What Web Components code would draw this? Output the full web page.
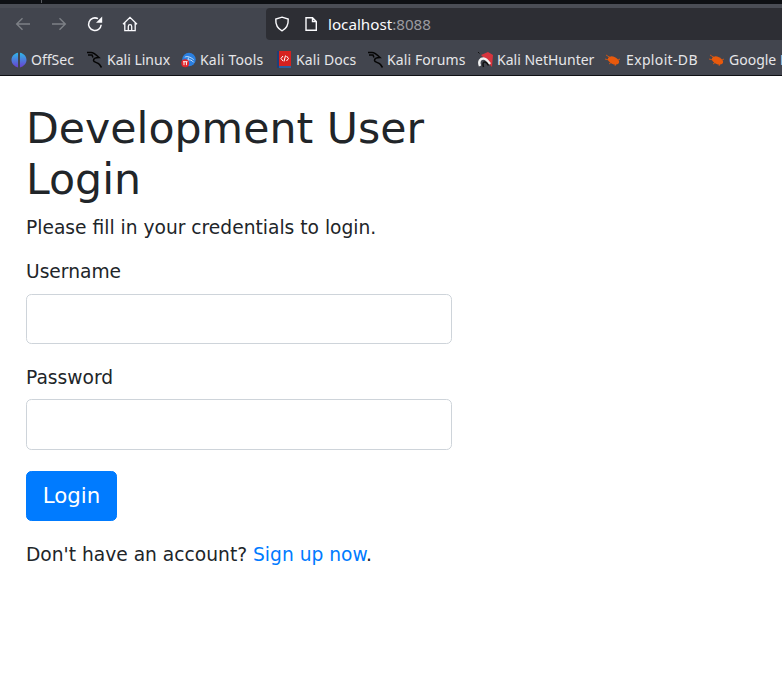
<!DOCTYPE html>
<html lang="en"><head><meta charset="utf-8"><title>Login</title>
<style>
html,body{margin:0;padding:0;background:#fff;height:100%;overflow:hidden}
body{font-family:"DejaVu Sans",sans-serif}
browser-chrome,login-page{display:block}
</style></head><body>
<template id="t-chrome">
<style>
:host{display:block;font-family:"Noto Sans",sans-serif;background:#42454e;color:#fbfbfe}
.top{height:4px;background:#0e1014;display:flex}
.tick{width:1px;height:3px;margin-left:41px;background:#5a5c62}
.bar{height:40px;display:flex;align-items:center;background:linear-gradient(#4a4d55 0,#4a4d55 4px,#42454e 4px)}
.navs{display:flex;width:266px;flex:none;padding-left:5px;box-sizing:border-box}
.nav{width:36px;height:36px;display:flex;align-items:center;justify-content:center;flex:none}
.nav.h{margin-left:-1px}
.url{flex:1;height:32px;background:#2d2e34;border-radius:4px 0 0 4px;display:flex;align-items:center;padding-left:8px;font-size:15.2px;color:#fbfbfe}
.url .g{color:#9a9aa0}
.url svg{flex:none}
.host{margin-left:10px}
.marks{height:31px;display:flex;align-items:center;padding-left:11px;font-size:14px;color:#e6e6e9;white-space:nowrap;overflow:hidden;border-bottom:1px solid #0e1014}
.m{display:flex;align-items:center;flex:none;box-sizing:border-box}
.m svg{flex:none;display:block;margin-right:4px}
</style>
<div class="top"><div class="tick"></div></div>
<div class="bar">
<div class="navs">
<div class="nav"><svg width="16" height="14" viewBox="0 0 16 14" fill="none" stroke="#7d8086" stroke-width="1.4"><path d="M15 7H2M7.500 1.200 1.700 7l5.800 5.800"/></svg></div>
<div class="nav"><svg width="16" height="14" viewBox="0 0 16 14" fill="none" stroke="#7d8086" stroke-width="1.4"><path d="M1 7h13M8.500 1.200 14.300 7l-5.800 5.800"/></svg></div>
<div class="nav"><svg width="16" height="16" viewBox="0 0 16 16" fill="none" stroke="#fbfbfe" stroke-width="1.5"><path d="M14.200 8.800A6.300 6.300 0 1 1 11 2.700"/><path d="M15.200.6v6.200H9z" fill="#fbfbfe" stroke="none"/></svg></div>
<div class="nav h"><svg width="16" height="16" viewBox="0 0 16 16" fill="none" stroke="#fbfbfe" stroke-width="1.300"><path d="M1 8.200 8 1.300l7 6.900M2.800 6.600v8h10.400v-8M6.300 14.600v-4.200a1.700 1.700 0 0 1 3.400 0v4.200"/></svg></div>
</div>
<div class="url">
<svg width="16" height="16" viewBox="0 0 16 16" fill="none" stroke="#fbfbfe" stroke-width="1.4"><path d="M8 1.200 14.200 3c.3 5.500-1.800 9.600-6.200 11.800C3.600 12.600 1.500 8.500 1.800 3z"/></svg>
<svg style="margin-left:14px" width="14" height="16" viewBox="0 0 14 16" fill="none" stroke="#fbfbfe" stroke-width="1.4"><path d="M2 1.700h6.500l3.800 3.800v8.800H2zM8.500 1.700v3.800h3.800"/></svg>
<span class="host">localhost<span class="g">:8088</span></span>
</div>
</div>
<div class="marks">
<span class="m" style="width:76px"><svg width="16" height="16" viewBox="0 0 16 16"><defs><linearGradient id="os" x1="0" y1="0" x2="0" y2="1"><stop offset="0" stop-color="#2fb6e8"/><stop offset="1" stop-color="#6a3fd0"/></linearGradient></defs><path d="M7 .8C3 1.500.5 4.500.5 8S3.500 14.500 7 15.500zM9 .8c4 .7 6.500 3.700 6.500 7.200S12.500 14.500 9 15.500z" fill="url(#os)"/></svg>OffSec</span>
<span class="m" style="width:94px"><svg width="16" height="17" viewBox="0 0 16 17" fill="none" stroke="#050505" stroke-width="1.500"><path d="M0 1.500h4C7 1.500 9 3.500 12 6.500 9 6.500 6.500 7.500 6.500 9.500c0 2 4 1.500 6 4l2 3M1 4h4l1 2.500"/></svg>Kali Linux</span>
<span class="m" style="width:96px;letter-spacing:.2px"><svg width="15" height="16" viewBox="0 0 16 16" style="margin-right:4px"><circle cx="8.500" cy="7.500" r="7.200" fill="#2a7fe0"/><path d="M4 5c3-1.500 6 0 9.500 2.500M8 5.500l-1 4M7.500 8c2-.5 4 0 6 2.500" stroke="#cfe3fa" stroke-width="1" fill="none"/><circle cx="4.500" cy="11.500" r="4.200" fill="#e0262a"/><path d="M3.200 10v3.500M5.800 10v3.500M2.200 9.800h4.800" stroke="#fff" stroke-width="1"/></svg>Kali Tools</span>
<span class="m" style="width:91px;letter-spacing:.1px"><svg width="15" height="17" viewBox="0 0 15 17" style="margin-right:4px"><rect x="1" y="0" width="13" height="15" fill="#d6211f"/><rect x="1" y="15" width="13" height="2" fill="#2e5f9e"/><path d="M0 0h2v17H0z" fill="#1e3f77"/><path d="M6 5 4 7.500 6 10M9.500 5l2 2.500-2 2.500M8.500 4.500 7 10.500" stroke="#fff" fill="none"/></svg>Kali Docs</span>
<span class="m" style="width:109px;letter-spacing:.1px"><svg width="16" height="17" viewBox="0 0 16 17" style="margin-right:3px" fill="none" stroke="#050505" stroke-width="1.500"><path d="M0 1.500h4C7 1.500 9 3.500 12 6.500 9 6.500 6.500 7.500 6.500 9.500c0 2 4 1.500 6 4l2 3M1 4h4l1 2.500"/></svg>Kali Forums</span>
<span class="m" style="width:128px"><svg width="16" height="16" viewBox="0 0 16 16"><path d="M4 3 11 0l5 3-1 12-7-8z" fill="#d7343d"/><path d="M1 0l1.500 1.500" stroke="#111" stroke-width="1"/><path d="M3 14C1 9 3.500 6.500 6.500 6.500c2.500 0 4.500 2.500 6.500 5.500" fill="none" stroke="#f2f2f2" stroke-width="2.400"/><path d="M6.500 15C5.500 12 6 10 7.500 10c1.500 0 3 1.500 4 3.500" fill="none" stroke="#111" stroke-width="1.500"/></svg>Kali NetHunter</span>
<span class="m" style="width:104px;letter-spacing:.35px"><svg width="16" height="14" viewBox="0 0 16 14" style="margin-right:5px"><ellipse cx="8.500" cy="7.500" rx="6" ry="3.600" transform="rotate(25 8.500 7.500)" fill="#e8590c"/><path d="M1 2l5 3M0 6l4 1M4 11l3-2M10 13l1-3M15 6l-2 1" stroke="#e8590c" stroke-width=".8"/></svg>Exploit-DB</span>
<span class="m"><svg width="16" height="14" viewBox="0 0 16 14"><ellipse cx="8.500" cy="7.500" rx="6" ry="3.600" transform="rotate(25 8.500 7.500)" fill="#e8590c"/><path d="M1 2l5 3M0 6l4 1M4 11l3-2M10 13l1-3M15 6l-2 1" stroke="#e8590c" stroke-width=".8"/></svg>Google Hacking DB</span>
</div>
</template>
<template id="t-field">
<style>
:host{display:block;margin-bottom:19px}
:host([last]){margin-bottom:0}
label{display:block;font-size:18.67px;line-height:28px;margin-bottom:8px;color:#212529}
:host([last]) label{padding-top:1px;margin-bottom:7px}
.i{display:block;width:100%;box-sizing:border-box;height:50.500px;border:1px solid #ced4da;border-radius:5.33px;background:#fff}
</style>
<label><slot></slot></label><input class="i" part="input">
</template>
<template id="t-login">
<style>
:host{display:block;box-sizing:border-box;width:478px;padding:26.500px 26px;color:#212529;font-family:"DejaVu Sans",sans-serif;font-size:18.67px;line-height:28px}
h1{margin:0 0 9px;font-size:42.67px;line-height:51.2px;font-weight:400}
p{margin:0}
.lead{margin-bottom:16px}
.btn{display:block;height:50.500px;width:91px;box-sizing:border-box;padding:0;margin:21px 0 19.600px;border:1px solid #007bff;border-radius:5.33px;background:#007bff;color:#fff;font:inherit;font-size:21.33px}
a{color:#007bff;text-decoration:none}
</style>
<h1>Development User Login</h1>
<p class="lead">Please fill in your credentials to login.</p>
<login-field>Username</login-field>
<login-field last>Password</login-field>
<button class="btn" type="button">Login</button>
<p>Don't have an account? <a href="#">Sign up now</a>.</p>
</template>
<browser-chrome></browser-chrome>
<login-page></login-page>
<script>
function def(n,t){customElements.define(n,class extends HTMLElement{constructor(){super();this.attachShadow({mode:'open'}).appendChild(document.getElementById(t).content.cloneNode(true));}});}
def('browser-chrome','t-chrome');def('login-field','t-field');def('login-page','t-login');
</script>
</body></html>
